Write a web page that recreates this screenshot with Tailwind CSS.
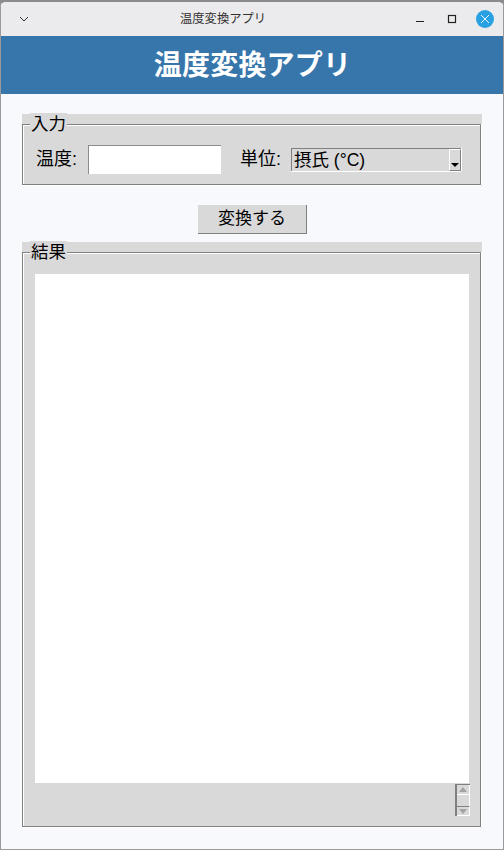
<!DOCTYPE html>
<html lang="ja">
<head>
    <meta charset="UTF-8">
    <title>温度変換アプリ</title>
    <script src="https://cdn.jsdelivr.net/npm/@tailwindcss/browser@4"></script>
</head>
<body class="font-['Liberation_Sans','Noto_Sans_CJK_JP',sans-serif] bg-[#8c8c8c]">
    <div class="w-[504px] h-[850px] flex flex-col overflow-hidden rounded-t-[6px] border border-[#9a9a9a] border-t-2 border-t-[#8a8a8a] bg-[#f8f9fd]">

        <!-- title bar -->
        <div class="h-[34px] shrink-0 bg-[#ebeaec] flex items-center relative">
            <svg class="ml-[17px] w-[12px] h-[12px] text-[#333]" viewBox="0 0 12 12" fill="none" stroke="currentColor" stroke-width="1"><path d="M2 4l4 4 4-4"/></svg>
            <span class="absolute left-[179px] top-[8px] text-[12.3px] leading-[18px] text-[#333]">温度変換アプリ</span>
            <div class="ml-auto flex items-center mr-[9px]">
                <svg class="w-[10px] h-[10px] text-[#222]" viewBox="0 0 10 10" stroke="currentColor" stroke-width="1"><path d="M1 7.5h8"/></svg>
                <svg class="ml-[22px] w-[10px] h-[10px] text-[#222]" viewBox="0 0 10 10" fill="none" stroke="currentColor" stroke-width="1.2"><rect x="1.5" y="1.5" width="7" height="7"/></svg>
                <span class="ml-[19px] w-[18px] h-[18px] rounded-full bg-[#27a1e2] flex items-center justify-center">
                    <svg class="w-[10px] h-[10px] text-white" viewBox="0 0 10 10" stroke="currentColor" stroke-width="0.9"><path d="M1 1l8 8M9 1l-8 8"/></svg>
                </span>
            </div>
        </div>

        <!-- header -->
        <div class="h-[58px] shrink-0 bg-[#3776ab] flex items-center justify-center pt-[2px]">
            <h1 class="text-[28px] leading-[40px] font-bold text-white ml-[1px] tracking-[0.2px]">温度変換アプリ</h1>
        </div>

        <div class="flex-1 pl-[21px] pt-[20px]">
            <!-- input frame -->
            <div class="relative w-[460px] h-[72px] bg-[#d9d9d9] pt-[10px]">
                <span class="absolute left-[8px] top-[-1px] px-[1px] text-[17.5px] leading-[22px] text-black bg-[#d9d9d9]">入力</span>
                <div class="h-[61px] w-[459px] border border-[#808080] shadow-[inset_1px_1px_0_#fff,0_1px_0_#fff,1px_0_0_#fff] flex items-center pl-[13px] pt-[10px]">
                    <span class="text-[18px] text-black w-[52px]">温度:</span>
                    <div class="w-[133px] h-[29px] bg-white border-l border-t border-[#8c8c8c] border-r-[#e5e5e5] border-b-[#e5e5e5]"></div>
                    <span class="ml-[19px] text-[18px] text-black w-[51px]">単位:</span>
                    <div class="w-[170px] h-[23px] flex justify-between border-l border-t border-[#808080] shadow-[0_1px_0_#fff,1px_0_0_#fff]">
                        <span class="pl-[2px] text-[17.5px] leading-[22px] text-black">摂氏 (°C)</span>
                        <div class="w-[12px] h-[22px] border-l border-t border-white border-r border-r-[#808080] border-b border-b-[#808080] flex items-end justify-center pb-[3px]">
                            <div class="w-0 h-0 border-x-[4px] border-x-transparent border-t-[4px] border-t-black"></div>
                        </div>
                    </div>
                </div>
            </div>

            <!-- convert button -->
            <div class="mt-[19px] ml-[176px] w-[109px] h-[29px] bg-[#d9d9d9] border-b border-r border-[#808080] flex items-center justify-center text-[17px] text-black">変換する</div>

            <!-- result frame -->
            <div class="relative mt-[8px] w-[460px] h-[586px] bg-[#d9d9d9] pt-[10px]">
                <span class="absolute left-[8px] top-[-1px] px-[1px] text-[17.5px] leading-[22px] text-black bg-[#d9d9d9]">結果</span>
                <div class="h-[575px] w-[459px] border border-[#808080] shadow-[inset_1px_1px_0_#fff,0_1px_0_#fff,1px_0_0_#fff] pl-[12px] pt-[21px]">
                    <div class="w-[434px] h-[509px] bg-white"></div>
                    <div class="ml-[420px] mt-[1px] w-[15px] h-[32px] flex flex-col border-l-2 border-t border-[#808080] bg-[#d9d9d9]">
                        <div class="h-[10px] border-b border-r border-white flex items-center justify-center">
                            <div class="w-0 h-0 border-x-[4px] border-x-transparent border-b-[5px] border-b-[#a3a3a3]"></div>
                        </div>
                        <div class="h-[11px] border-r border-white"></div>
                        <div class="h-[10px] border-t border-b border-r border-white border-t-[#808080] flex items-center justify-center">
                            <div class="w-0 h-0 border-x-[4px] border-x-transparent border-t-[5px] border-t-[#a3a3a3]"></div>
                        </div>
                    </div>
                </div>
            </div>
        </div>
    </div>
</body>
</html>
